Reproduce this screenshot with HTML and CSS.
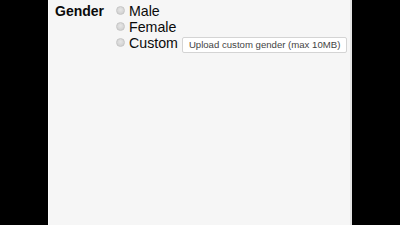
FILE: index.html
```html
<!DOCTYPE html>
<html>
<head>
<meta charset="utf-8">
<link rel="stylesheet" href="styles.css">
</head>
<body>
<div class="panel">
  <div class="field">
    <div class="label">Gender</div>
    <div class="options">
      <div class="option"><span class="radio"></span><span class="text">Male</span></div>
      <div class="option"><span class="radio"></span><span class="text">Female</span></div>
      <div class="option"><span class="radio"></span><span class="text">Custom</span><button class="upload">Upload custom gender (max 10MB)</button></div>
    </div>
  </div>
</div>
</body>
</html>
```
FILE: styles.css
```css
html, body {
  margin: 0;
  padding: 0;
  background: #000;
  height: 225px;
  overflow: hidden;
}
.panel {
  margin-left: 48px;
  width: 301px;
  height: 225px;
  background: #f6f6f6;
  border-left: 1px solid #fdfdfd;
  border-right: 2px solid #e4e4e4;
  font-family: "Liberation Sans", Arial, sans-serif;
  color: #0a0a0a;
}
.field {
  display: flex;
  padding: 3px 0 0 6px;
}
.label {
  flex: none;
  width: 61px;
  font-weight: bold;
  font-size: 14px;
  line-height: 16px;
}
.options {
  display: flex;
  flex-direction: column;
}
.option {
  display: flex;
  align-items: center;
  height: 16px;
  font-size: 14.2px;
  line-height: 16px;
  white-space: nowrap;
}
.radio {
  flex: none;
  width: 9px;
  height: 9px;
  border-radius: 50%;
  background: radial-gradient(circle at 50% 40%, #e6e6e6, #cbcbcb);
  border: 1px solid #c6c6c6;
  box-sizing: border-box;
  margin-right: 4px;
  margin-bottom: 1px;
}
.upload {
  flex: none;
  align-self: flex-start;
  margin: 2px 0 0 4px;
  height: 16px;
  padding: 0 6px;
  font-family: "Liberation Sans", Arial, sans-serif;
  font-size: 9.6px;
  line-height: 14px;
  color: #444;
  background: #fff;
  border: 1px solid #d4d4d4;
  border-radius: 2px;
  white-space: nowrap;
}
```
